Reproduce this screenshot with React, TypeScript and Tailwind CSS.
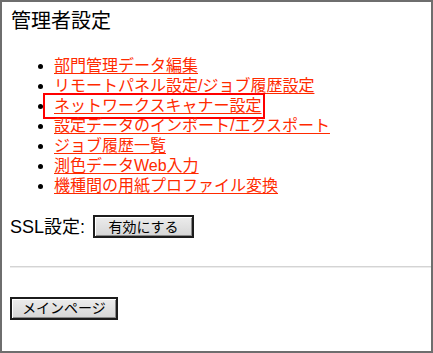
import React from 'react';

const LINKS = [
  '部門管理データ編集',
  'リモートパネル設定/ジョブ履歴設定',
  'ネットワークスキャナー設定',
  '設定データのインポート/エクスポート',
  'ジョブ履歴一覧',
  '測色データWeb入力',
  '機種間の用紙プロファイル変換',
];

const FONT = "font-['Liberation_Sans','Noto_Sans_CJK_JP',sans-serif]";

function OldButton({ label, width }: { label: string; width: string }) {
  return (
    <button
      className={`${width} ${FONT} h-[23px] border-2 border-[#1c1c1c] bg-gradient-to-b from-[#ececec] to-[#d6d6d6] shadow-[inset_1px_1px_0_#ffffff,inset_-1px_-1px_0_#8a8a8a] text-[14px] leading-none text-black`}
    >
      {label}
    </button>
  );
}

export default function App() {
  return (
    <div className={`w-[433px] h-[353px] border-2 border-[#6e6e6e] bg-white ${FONT} text-black`}>
      <div className="pl-[8px] pt-[7px]">
        <h1 className="text-[20px] leading-[24px] ml-[1px]">管理者設定</h1>

        {/* Menu links */}
        <ul className="mt-[23px] pl-[28px]">
          {LINKS.map((label, i) => (
            <li key={label} className="flex items-center h-[20px]">
              <span className="w-[5px] h-[5px] rounded-full bg-black shrink-0" />
              <span className="relative ml-[11px]">
                <a
                  href="#"
                  className="text-[16px] leading-[20px] text-[#ff2a00] underline underline-offset-[2px] whitespace-nowrap"
                >
                  {label}
                </a>
                {i === 2 && (
                  <span className="absolute -left-[11px] w-[222px] -top-[1px] -bottom-[1px] border-2 border-[#ff0000]" />
                )}
              </span>
            </li>
          ))}
        </ul>

        <div className="mt-[19px] flex items-center gap-[8px]">
          <span className="text-[18px] leading-[22px]">SSL設定:</span>
          <OldButton label="有効にする" width="w-[101px]" />
        </div>

        <div className="mt-[28px] h-[2px] bg-[#d4d4d4] border-b border-[#ececec]" />

        <div className="mt-[28px]">
          <OldButton label="メインページ" width="w-[108px]" />
        </div>
      </div>
    </div>
  );
}
